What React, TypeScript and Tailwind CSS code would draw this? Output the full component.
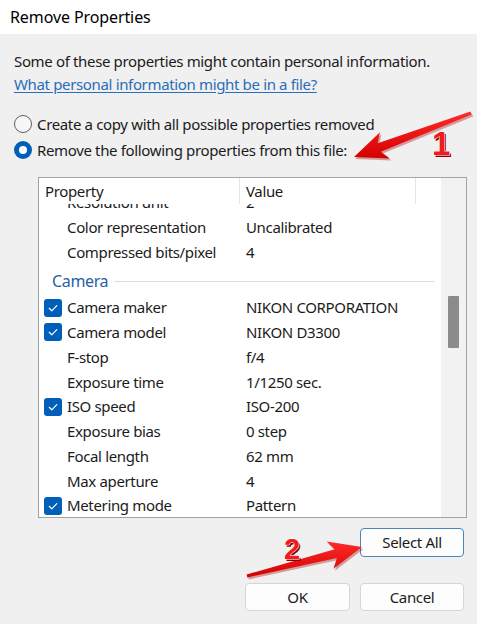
import React from 'react';

type Row = { name: string; value: string; checked?: boolean };

const topRows: Row[] = [
    { name: 'Resolution unit', value: '2' },
    { name: 'Color representation', value: 'Uncalibrated' },
    { name: 'Compressed bits/pixel', value: '4' },
];

const cameraRows: Row[] = [
    { name: 'Camera maker', value: 'NIKON CORPORATION', checked: true },
    { name: 'Camera model', value: 'NIKON D3300', checked: true },
    { name: 'F-stop', value: 'f/4' },
    { name: 'Exposure time', value: '1/1250 sec.' },
    { name: 'ISO speed', value: 'ISO-200', checked: true },
    { name: 'Exposure bias', value: '0 step' },
    { name: 'Focal length', value: '62 mm' },
    { name: 'Max aperture', value: '4' },
    { name: 'Metering mode', value: 'Pattern', checked: true },
];

function Checkbox() {
    return (
        <span className="flex h-[18px] w-[18px] shrink-0 items-center justify-center rounded-[3px] bg-[#005fb8]">
            <svg width="12" height="12" viewBox="0 0 12 12" fill="none">
                <polyline points="2.2,6.3 4.8,8.8 9.8,3.6" stroke="#fff" strokeWidth="1.2" strokeLinecap="round" strokeLinejoin="round" />
            </svg>
        </span>
    );
}

function PropRow({ row }: { row: Row }) {
    return (
        <div className="flex h-[24.75px] shrink-0 items-center">
            <div className="flex w-[201px] shrink-0 items-center pl-[5px]">
                {row.checked ? <Checkbox /> : <span className="w-[18px] shrink-0" />}
                <span className="ml-[5px] whitespace-nowrap">{row.name}</span>
            </div>
            <span className="pl-[6px] whitespace-nowrap">{row.value}</span>
        </div>
    );
}

// arrow polygon from tail to tip
function arrowPoints(tx: number, ty: number, px: number, py: number, head: number, wing: number, wTail: number, wHead: number) {
    const len = Math.hypot(px - tx, py - ty);
    const dx = (px - tx) / len;
    const dy = (py - ty) / len;
    const nx = -dy;
    const ny = dx;
    const bx = px - dx * head;
    const by = py - dy * head;
    const wx = bx - dx * 6;
    const wy = by - dy * 6;
    const pts = [
        [tx + (nx * wTail) / 2, ty + (ny * wTail) / 2],
        [bx + (nx * wHead) / 2, by + (ny * wHead) / 2],
        [wx + nx * wing, wy + ny * wing],
        [px, py],
        [wx - nx * wing, wy - ny * wing],
        [bx - (nx * wHead) / 2, by - (ny * wHead) / 2],
        [tx - (nx * wTail) / 2, ty - (ny * wTail) / 2],
    ];
    return pts.map((p) => p.join(',')).join(' ');
}

function Annotations() {
    const a1 = arrowPoints(471, 113, 354, 157, 27, 14, 3, 9);
    const a2 = arrowPoints(247, 576, 362, 547, 27, 14, 3, 9);
    return (
        <svg className="pointer-events-none absolute inset-0" width="477" height="624" viewBox="0 0 477 624">
            <defs>
                <linearGradient id="red" x1="0" y1="0" x2="0" y2="1">
                    <stop offset="0" stopColor="#ff2a2a" />
                    <stop offset="1" stopColor="#d40000" />
                </linearGradient>
            </defs>
            <polygon points={a1} fill="#9a0000" opacity="0.35" transform="translate(1.5,2)" />
            <polygon points={a1} fill="url(#red)" />
            <polygon points={a2} fill="#9a0000" opacity="0.35" transform="translate(1.5,2)" />
            <polygon points={a2} fill="url(#red)" />
            <text x="441" y="155" textAnchor="middle" fontFamily="Liberation Sans, Arial, sans-serif" fontWeight="700" fontSize="33" fill="#8a0000" transform="translate(1.5,1.5)">1</text>
            <text x="441" y="155" textAnchor="middle" fontFamily="Liberation Sans, Arial, sans-serif" fontWeight="700" fontSize="33" fill="#ee1c1c" stroke="#fff" strokeWidth="1" paintOrder="stroke">1</text>
            <text x="292" y="559" textAnchor="middle" fontFamily="Liberation Sans, Arial, sans-serif" fontWeight="700" fontSize="29" fill="#8a0000" transform="translate(1.5,1.5)">2</text>
            <text x="292" y="559" textAnchor="middle" fontFamily="Liberation Sans, Arial, sans-serif" fontWeight="700" fontSize="29" fill="#ee1c1c" stroke="#fff" strokeWidth="1" paintOrder="stroke">2</text>
        </svg>
    );
}

export default function App() {
    return (
        <div className="relative flex h-[624px] w-[477px] flex-col overflow-hidden bg-[#f0f0f0] font-['Noto_Sans',sans-serif] text-[15px] tracking-[-0.35px] text-[#1b1b1b]">
            {/* title bar */}
            <div className="flex h-[34px] shrink-0 items-center bg-white pl-[10px] text-[16px] tracking-[-0.1px] text-black">Remove Properties</div>

            <div className="flex flex-col px-[14px] pt-[16px]">
                <p className="leading-[23px]">Some of these properties might contain personal information.</p>
                <a className="w-fit leading-[23px] text-[#2a6db8] underline underline-offset-2">What personal information might be in a file?</a>

                {/* radios */}
                <div className="mt-[15px] flex h-[26px] items-center">
                    <span className="h-[18px] w-[18px] rounded-full border border-[#5f5f5f] bg-[#f7f7f7]" />
                    <span className="ml-[5px]">Create a copy with all possible properties removed</span>
                </div>
                <div className="flex h-[26px] items-center">
                    <span className="flex h-[18px] w-[18px] items-center justify-center rounded-full bg-[#005fb8]">
                        <span className="h-[8px] w-[8px] rounded-full bg-white" />
                    </span>
                    <span className="ml-[5px]">Remove the following properties from this file:</span>
                </div>

                {/* property list */}
                <div className="mt-[14px] ml-[24px] flex h-[341px] w-[429px] border border-[#a3a3a3] bg-white">
                    <div className="flex w-[402px] flex-col">
                        <div className="flex h-[26px] shrink-0 items-center bg-white">
                            <div className="flex h-full w-[201px] items-center border-r border-[#e5e5e5] pl-[6px]">Property</div>
                            <div className="flex h-full w-[176px] items-center border-r border-[#e5e5e5] pl-[6px]">Value</div>
                        </div>
                        {/* scrolled rows, first one half hidden under the header */}
                        <div className="flex min-h-0 flex-1 flex-col overflow-hidden">
                            <div className="-mt-[14px] flex flex-col">
                                {topRows.map((r) => (
                                    <PropRow key={r.name} row={r} />
                                ))}
                                <div className="flex h-[31px] shrink-0 items-center pt-[3px] pl-[13px]">
                                    <span className="text-[16px] text-[#1f5fa8]">Camera</span>
                                    <span className="ml-[6px] h-px w-[320px] bg-[#dcdcdc]" />
                                </div>
                                {cameraRows.map((r) => (
                                    <PropRow key={r.name} row={r} />
                                ))}
                            </div>
                        </div>
                    </div>
                    {/* scrollbar */}
                    <div className="flex w-[25px] flex-col bg-[#f2f2f2] pt-[118px] pl-[7px]">
                        <div className="h-[52px] w-[11px] rounded-[1px] bg-[#8b8b8b]" />
                    </div>
                </div>

                {/* buttons */}
                <div className="mt-[10px] flex justify-end">
                    <button className="mr-[-1px] h-[29px] w-[104px] rounded-[4px] border border-[#4a86b8] bg-[#fdfdfd] text-[15px]">Select All</button>
                </div>
                <div className="mt-[26px] flex justify-end gap-[10px]">
                    <button className="h-[28px] w-[105px] rounded-[4px] border border-[#d5d5d5] bg-[#fdfdfd] text-[15px]">OK</button>
                    <button className="mr-[-1px] h-[28px] w-[104px] rounded-[4px] border border-[#d5d5d5] bg-[#fdfdfd] text-[15px]">Cancel</button>
                </div>
            </div>

            <Annotations />
        </div>
    );
}
